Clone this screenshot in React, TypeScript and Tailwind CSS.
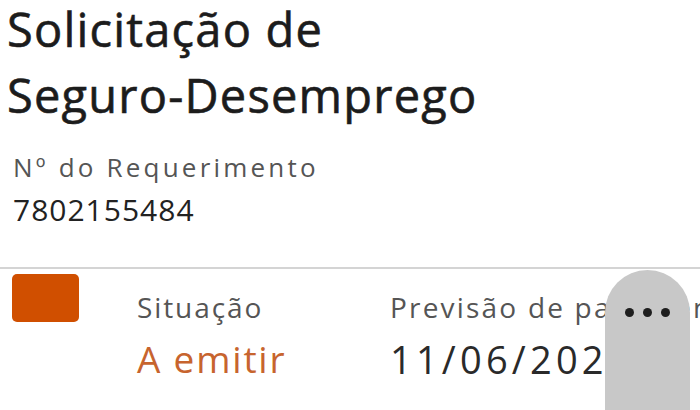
import React from "react";

export default function App() {
  return (
    <div
      className="relative w-[700px] h-[410px] overflow-hidden bg-white"
      style={{ fontFamily: '"Open Sans", "Noto Sans", sans-serif' }}
    >
      <h1 className="pl-[7px] pt-0 -mt-[4px] text-[47px] leading-[66px] font-normal text-[#1c1c1c] tracking-[1.2px] [-webkit-text-stroke:0.6px_#1c1c1c]">
        <div>Solicitação de</div>
        <div>Seguro-Desemprego</div>
      </h1>
      <div className="pl-[13px] mt-[24px]">
        <div className="text-[26px] leading-[30px] text-[#555555] tracking-[3.2px]">Nº do Requerimento</div>
        <div className="mt-[8px] text-[30px] leading-[40px] text-[#222222] tracking-[1px]">7802155484</div>
      </div>
      <div className="mt-[37px] h-[2px] bg-[#d4d4d4]" />
      <div className="flex pt-[5px]">
        <div className="ml-[12px] w-[67px] h-[48px] rounded-[5px] bg-[#d04f00] shrink-0" />
        <div className="ml-[58px] w-[253px] shrink-0 flex flex-col pt-[16px]">
          <div className="text-[28px] leading-[34px] text-[#555555] tracking-[1.9px]">Situação</div>
          <div className="mt-[10px] text-[37px] leading-[50px] text-[#c7642e] tracking-[1.8px]">A emitir</div>
        </div>
        <div className="flex flex-col pt-[16px] whitespace-nowrap">
          <div className="text-[28px] leading-[34px] text-[#555555] tracking-[2.2px]">Previsão de pagamento</div>
          <div className="mt-[10px] text-[38px] leading-[50px] text-[#2a2a2a] tracking-[4.2px]">11/06/2024</div>
        </div>
      </div>
      <div className="absolute left-[605px] top-[270px] w-[85px] h-[160px] rounded-t-[43px] bg-[#c8c8c8] flex justify-center pt-[38px] gap-[9px]">
        <span className="w-[9px] h-[9px] rounded-full bg-[#1e1e1e]" />
        <span className="w-[9px] h-[9px] rounded-full bg-[#1e1e1e]" />
        <span className="w-[9px] h-[9px] rounded-full bg-[#1e1e1e]" />
      </div>
    </div>
  );
}
